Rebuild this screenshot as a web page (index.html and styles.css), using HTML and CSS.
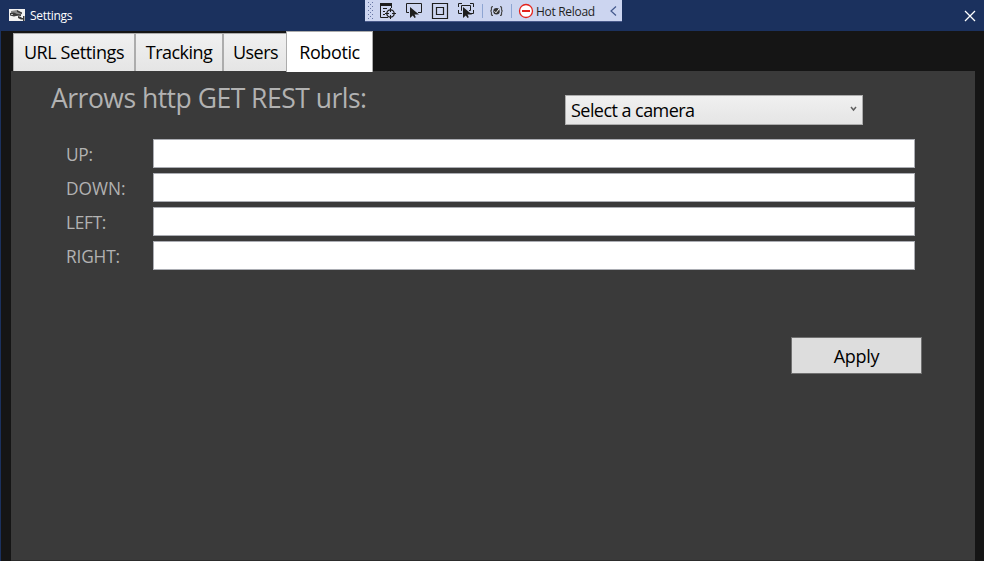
FILE: index.html
```html
<!DOCTYPE html>
<html lang="en">
<head>
<meta charset="utf-8">
<title>Settings</title>
<link rel="stylesheet" href="styles.css">
</head>
<body>
<div class="window">
  <header class="titlebar">
    <svg class="app-icon" width="16" height="12" viewBox="0 0 16 12">
      <path fill="#f2f2f2" d="M0 0h16v12H0z"/>
      <path fill="#8a8a8a" d="M2 2l6-1 5 3-1 2-4 1-6-1z"/>
      <path fill="#3a3a3a" d="M1 4l4-.5L8 5l4 .5V7L9 6.500 5 7.500 1 6.500zM8 1l5 2.500V5L8 3zM9 7l3 1 1 1h1V7h1.500v5H14v-1.500h-2L9 9z"/>
      <path fill="#bbb" d="M2 5h2v1H2z"/>
    </svg>
    <span class="title">Settings</span>
    <svg class="close" width="12" height="12" viewBox="0 0 12 12"><path d="M1 1l10 10M11 1L1 11" stroke="#fff" stroke-width="1.25"/></svg>
  </header>

  <div class="debug-bar">
    <svg width="257" height="21" viewBox="0 0 257 21" fill="none">
      <g stroke="#6675a3" stroke-dasharray="1 3">
        <path d="M3.500 2v18M7.500 2v18"/><path d="M5.500 4v16"/>
      </g>
      <g stroke="#1e1e1e">
        <path d="M23 17.500h-7.500V4M26.500 4v4M18 8.500h4M18 11.500h2M18 14.500h2"/>
        <path d="M15 4.500h12" stroke-width="3"/>
        <circle cx="25.500" cy="13.500" r="3.700" stroke-width="1.300"/>
        <path d="M25.500 8v4M25.500 15v4M20 13.500h4M27 13.500h4"/>
        <path d="M44 12.500h-2.500v-9h15v9H53"/>
        <path d="M67.500 3.500h15v15h-15zM71.500 7.500h7v7h-7z" stroke-width="1.200"/>
        <path d="M93.500 7V3.500H97M105 3.500h3.500V7M93.500 10v3.500H97M105 13.500h3.500V10M97 10.500h-.5v-5h9v5H104"/>
      </g>
      <path fill="#1e1e1e" d="M45 7v11l2.800-2.500L49.500 18l1.300-.8-1.300-2.700H54zM98 7v11l2.800-2.500 1.700 2.500 1.300-.8-1.300-2.700h4.500z"/>
      <path d="M117.500 4v14M146.500 4v14" stroke="#8ea5d2"/>
      <path d="M128 6.500q-2 0-1.500 2.500 0 2-1.200 2 1.200 0 1.200 2-.5 2.500 1.500 2.500M135 6.500q2 0 1.500 2.500 0 2 1.200 2-1.200 0-1.200 2 .5 2.500-1.500 2.500" stroke="#444" stroke-width="1.200"/>
      <circle cx="131.500" cy="11.300" r="3.200" fill="#333"/><path d="M129.500 11.300l1.500 1.500 3-3.800" stroke="#fff"/>
      <circle cx="161" cy="11" r="6.500" fill="#fff" stroke="#e3231c" stroke-width="1.300"/>
      <path d="M157 11h8" stroke="#e3231c" stroke-width="2"/>
      <path d="M251 6.500L246 11l5 4.500" stroke="#44598c" stroke-width="1.200"/>
    </svg>
    <span class="hot-reload">Hot Reload</span>
  </div>

  <nav class="tabs">
    <div class="tab tab-url"><span>URL Settings</span></div>
    <div class="tab tab-tracking"><span>Tracking</span></div>
    <div class="tab tab-users"><span>Users</span></div>
    <div class="tab tab-robotic selected"><span>Robotic</span></div>
  </nav>

  <main class="panel">
    <div class="heading-row">
      <h1>Arrows http GET REST urls:</h1>
      <div class="combo"><span>Select a camera</span>
        <svg width="7" height="6" viewBox="0 0 7 6"><path d="M1 1l2.500 3L6 1" fill="none" stroke="#606060" stroke-width="1.500"/></svg>
      </div>
    </div>
    <form class="fields">
      <label class="up" for="up">UP:</label><input id="up" type="text">
      <label class="down" for="down">DOWN:</label><input id="down" type="text">
      <label class="left" for="left">LEFT:</label><input id="left" type="text">
      <label class="right" for="right">RIGHT:</label><input id="right" type="text">
    </form>
    <button class="apply" type="button">Apply</button>
  </main>
</div>
</body>
</html>
```

FILE: styles.css
```css
* { box-sizing: border-box; }
body {
  margin: 0;
  font-family: "Open Sans", "Noto Sans", sans-serif;
  font-size: 18px;
  color: #000;
}
.window {
  position: relative;
  width: 984px;
  height: 561px;
  overflow: hidden;
  display: flex;
  flex-direction: column;
  background: #151515;
  border-left: 1px solid #1b315e;
}
.titlebar {
  height: 31px;
  flex: none;
  display: flex;
  align-items: center;
  padding: 0 8px;
  background: #1b315e;
  color: #fff;
}
.title { font-size: 12px; margin-left: 5px; letter-spacing: -0.3px; }
.close { margin-left: auto; margin-right: 0; }
.app-icon { margin-top: -1px; }
.debug-bar {
  position: absolute;
  left: 364px;
  top: 0;
  width: 257px;
  height: 22px;
  background: #ccd5f0;
  border-bottom: 1px solid #48598a;
}
.debug-bar svg { display: block; }
.hot-reload {
  position: absolute;
  left: 171px;
  top: 3px;
  line-height: 17px;
  font-size: 12px;
  letter-spacing: -0.3px;
  white-space: nowrap;
  color: #1e1e1e;
}
.tabs {
  flex: none;
  height: 40px;
  display: flex;
  align-items: flex-end;
  padding-left: 12px;
}
.tab {
  height: 38px;
  display: flex;
  align-items: center;
  justify-content: center;
  padding-bottom: 1px;
  white-space: nowrap;
  border: 1px solid #acacac;
  border-bottom: 0;
  background: linear-gradient(#f0f0f0, #e5e5e5);
}
.tab-url { width: 122px; letter-spacing: -0.4px; }
.tab-tracking { width: 88px; letter-spacing: -0.55px; }
.tab-users { width: 65px; letter-spacing: -0.55px; }
.tab.selected {
  width: 87px;
  height: 41px;
  margin: 0 0 -1px -2px;
  padding-bottom: 1px;
  background: #fff;
  position: relative;
  letter-spacing: -0.4px;
}
.panel {
  flex: 1;
  margin: 0 9px 0 10px;
  background: #3a3a3a;
  border-bottom: 1px solid #2c2c2c;
}
.heading-row { display: flex; height: 68px; padding-left: 40px; }
h1 {
  width: 514px;
  margin: 8px 0 0;
  font-size: 26.5px;
  line-height: 38px;
  font-weight: 400;
  letter-spacing: -0.5px;
  color: #b2b2b2;
  white-space: nowrap;
}
.combo {
  width: 298px;
  height: 30px;
  margin-top: 24px;
  padding: 0 5px;
  display: flex;
  align-items: center;
  justify-content: space-between;
  border: 1px solid #acacac;
  background: linear-gradient(#f0f0f0, #e5e5e5);
  letter-spacing: -0.55px;
}
.combo svg { margin-top: -3px; }
.fields {
  display: grid;
  grid-template-columns: 87px 762px;
  grid-auto-rows: 29px;
  row-gap: 5px;
  margin-left: 55px;
}
label { color: #b2b2b2; font-size: 17.3px; line-height: 31px; letter-spacing: -0.3px; }
label.down { letter-spacing: 0; }
label.right { letter-spacing: -0.15px; }
input { width: 762px; height: 29px; padding: 0 4px; border: 1px solid #abadb3; background: #fff; font: inherit; }
.apply {
  display: block;
  width: 131px;
  height: 37px;
  margin: 67px 0 0 780px;
  padding: 0;
  border: 1px solid #707070;
  background: #ddd;
  color: #000;
  font: inherit;
  letter-spacing: -0.3px;
}
```
